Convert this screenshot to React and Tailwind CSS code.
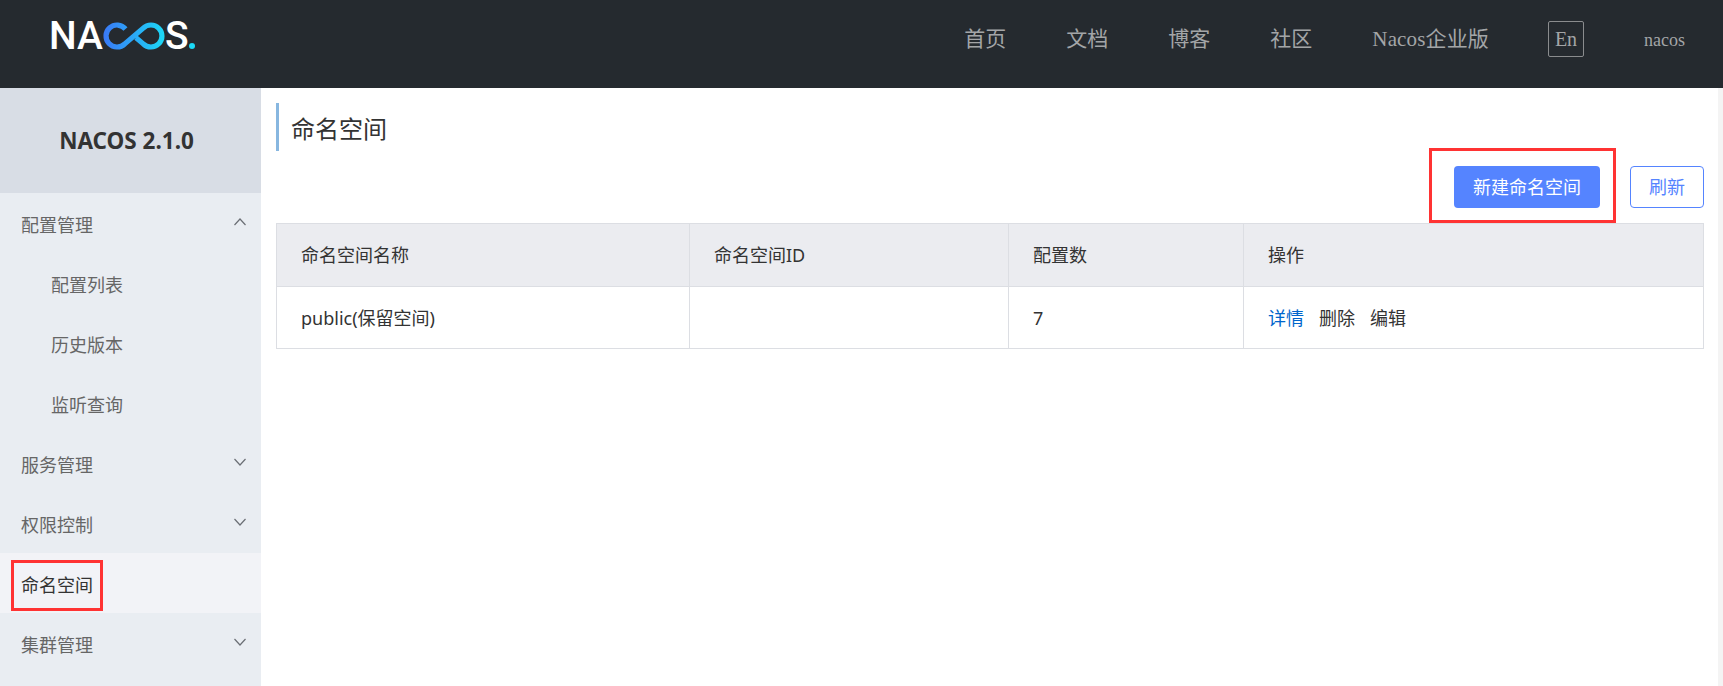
import React from "react";

const menu = [
  { label: "配置管理", arrow: "up" },
  { label: "配置列表", sub: true },
  { label: "历史版本", sub: true },
  { label: "监听查询", sub: true },
  { label: "服务管理", arrow: "down" },
  { label: "权限控制", arrow: "down" },
  { label: "命名空间", active: true },
  { label: "集群管理", arrow: "down" },
];

const nav = ["首页", "文档", "博客", "社区", "Nacos企业版"];

function Arrow({ dir }) {
  return (
    <svg width="14" height="10" viewBox="0 0 14 10" fill="none" stroke="#6b6f75" strokeWidth="1.2" className="absolute right-[14px] top-[24px]">
      <path d={dir === "up" ? "M1.5 8 L7 2 L12.5 8" : "M1.5 2 L7 8 L12.5 2"} />
    </svg>
  );
}

function Logo() {
  return (
    <div className="flex items-center h-[28px] mt-[22px] ml-[49px] text-white font-medium text-[39px] leading-[28px] font-['Roboto',sans-serif]">
      <span>NA</span>
      <svg width="62" height="28" viewBox="0 0 62 28" fill="none" strokeWidth="5.2" className="shrink-0">
        <defs>
          <linearGradient id="inf" x1="0" y1="0" x2="62" y2="0" gradientUnits="userSpaceOnUse">
            <stop offset="0" stopColor="#3a78f6" />
            <stop offset="1" stopColor="#1bd9f6" />
          </linearGradient>
        </defs>
        <path
          d="M22.5 7 A11 11 0 1 0 21.8 21.8 L40.2 6.2 A11 11 0 1 1 40.2 21.8 L33 15.8"
          stroke="url(#inf)"
        />
      </svg>
      <span>S</span>
      <span className="w-[6px] h-[6px] rounded-full bg-[#1bd9f6] self-end mb-[1px]" />
    </div>
  );
}

export default function App() {
  return (
    <div className="relative w-[1723px] h-[686px] overflow-hidden bg-white text-[#333] font-['Noto_Sans','Noto_Sans_CJK_SC',sans-serif]">
      {/* header */}
      <header className="flex h-[88px] bg-[#252a2f]">
        <Logo />
        <nav className="ml-auto flex items-start pt-[21px] pr-[38px] text-[#a3a5a7] font-['Liberation_Serif','Noto_Sans_CJK_SC',serif]">
          <div className="flex gap-[60px] h-[36px] pt-[2px] items-center text-[21px]">
            {nav.map((n) => (
              <span key={n} className={n.startsWith("Nacos") ? "tracking-[0.15px]" : ""}>{n}</span>
            ))}
          </div>
          <span className="ml-[59px] w-[36px] h-[36px] flex items-center justify-center border border-[#8a8c8e] rounded-[2px] text-[20px]">En</span>
          <span className="ml-[60px] h-[36px] pt-[2px] flex items-center text-[18px]">nacos</span>
        </nav>
      </header>

      <div className="flex h-[598px]">
        {/* sidebar */}
        <aside className="w-[261px] shrink-0 bg-[#e9edf2]">
          <div className="h-[105px] pr-[8px] bg-[#d8dde5] flex items-center justify-center text-[22.5px] font-bold text-[#333]">NACOS 2.1.0</div>
          {menu.map((m) => (
            <div
              key={m.label}
              className={`relative h-[60px] pt-[4px] flex items-center text-[18px] ${m.sub ? "pl-[51px]" : "pl-[21px]"} ${m.active ? "bg-[#f2f3f7] text-[#333]" : "text-[#666]"}`}
            >
              {m.label}
              {m.arrow && <Arrow dir={m.arrow} />}
            </div>
          ))}
        </aside>

        {/* main */}
        <main className="flex-1 pl-[15px] pr-[19px] pt-[15px]">
          <h1 className="h-[48px] border-l-[3px] border-[#88b7e0] pl-[12px] pt-[4px] flex items-center text-[24px] font-normal">命名空间</h1>
          <div className="flex justify-end gap-[30px] mt-[15px]">
            <button className="w-[146px] h-[42px] rounded-[4px] bg-[#5584ff] text-white text-[18px]">新建命名空间</button>
            <button className="w-[74px] h-[42px] rounded-[4px] border border-[#5584ff] text-[#5584ff] text-[18px]">刷新</button>
          </div>
          <div className="mt-[15px] border border-[#dcdee3] text-[18px]">
            <div className="grid grid-cols-[413px_319px_235px_1fr] h-[63px] bg-[#ebecf0] border-b border-[#dcdee3]">
              <div className="flex items-center pl-[24px] pt-[1px] border-r border-[#dcdee3]">命名空间名称</div>
              <div className="flex items-center pl-[24px] pt-[1px] border-r border-[#dcdee3]">命名空间ID</div>
              <div className="flex items-center pl-[24px] pt-[1px] border-r border-[#dcdee3]">配置数</div>
              <div className="flex items-center pl-[24px] pt-[1px]">操作</div>
            </div>
            <div className="grid grid-cols-[413px_319px_235px_1fr] h-[61px]">
              <div className="flex items-center pl-[24px] pt-[1px] border-r border-[#dcdee3]">public(保留空间)</div>
              <div className="border-r border-[#dcdee3]" />
              <div className="flex items-center pl-[24px] pt-[1px] border-r border-[#dcdee3]">7</div>
              <div className="flex items-center pl-[24px] pt-[1px] gap-[15px]">
                <span className="text-[#0066cc]">详情</span>
                <span>删除</span>
                <span>编辑</span>
              </div>
            </div>
          </div>
        </main>
      </div>

      {/* scrollbar track */}
      <div className="absolute right-0 top-[88px] bottom-0 w-[5px] bg-[#f4f4f4]" />

      {/* red annotation boxes */}
      <div className="absolute left-[1429px] top-[148px] w-[187px] h-[75px] border-[3px] border-[#ff3333]" />
      <div className="absolute left-[11px] top-[560px] w-[92px] h-[51px] border-[3px] border-[#ff3333]" />
    </div>
  );
}
